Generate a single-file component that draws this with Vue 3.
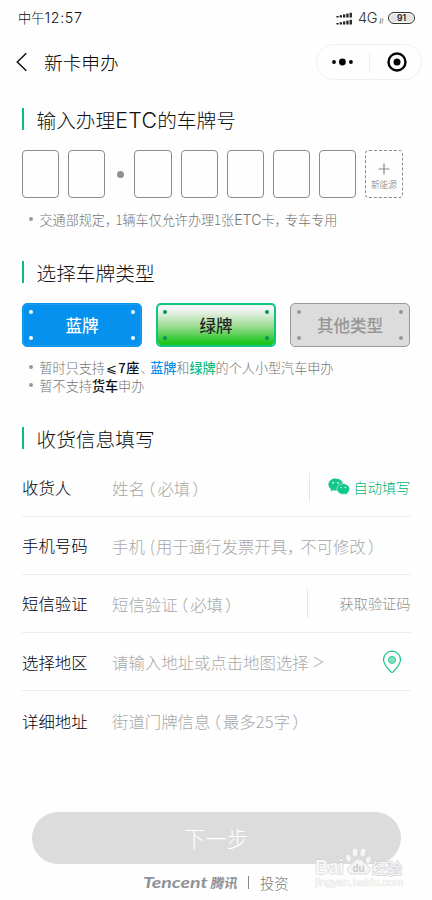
<script setup>
const signalBars = [0, 1, 2, 3, 4]
const boxesLeft = [1, 2]
const boxesRight = [1, 2, 3, 4, 5]
const plates = [
  { name: '蓝牌', kind: 'blue' },
  { name: '绿牌', kind: 'green' },
  { name: '其他类型', kind: 'other' },
]
</script>

<template>
  <div class="page">
    <header class="status">
      <span class="time">中午<span class="lat">12:57</span></span>
      <div class="status-right">
        <svg class="signal" width="17" height="13" viewBox="0 0 17 13">
          <g fill="#222">
            <rect v-for="i in signalBars" :key="'a' + i" :x="i * 3.3 + 0.4" :y="4 - i * 0.8" width="2.3" :height="1.5 + i * 0.8" />
            <rect v-for="i in signalBars" :key="'b' + i" :x="i * 3.3 + 0.4" :y="11 - i * 0.8" width="2.3" :height="1.5 + i * 0.8" />
          </g>
        </svg>
        <span class="net">4G</span>
        <svg class="updown" width="5" height="6" viewBox="0 0 5 6"><path d="M0 4.2L1.5 5.4V0.5M3.2 5.5V0.6L4.8 2" fill="none" stroke="#888" stroke-width=".8" /></svg>
        <span class="battery"><b>91</b></span>
      </div>
    </header>

    <nav class="nav">
      <svg class="back" width="12" height="20" viewBox="0 0 12 20"><path d="M10.3 1.3L1.3 10L10.3 18.7" fill="none" stroke="#111" stroke-width="1.5" /></svg>
      <h1>新卡申办</h1>
      <div class="capsule">
        <svg width="21" height="8" viewBox="0 0 21 8"><circle cx="2" cy="4" r="1.9" /><circle cx="10.4" cy="4" r="3.4" /><circle cx="18.9" cy="4" r="1.9" /></svg>
        <i></i>
        <svg width="20" height="20" viewBox="0 0 20 20"><circle cx="10" cy="10" r="8.5" fill="none" stroke="#000" stroke-width="2.4" /><circle cx="10" cy="10" r="3.5" /></svg>
      </div>
    </nav>

    <main>
      <h2 class="first">输入办理<span class="lat">ETC</span>的车牌号</h2>
      <div class="boxes">
        <span v-for="n in boxesLeft" :key="n" class="box"></span>
        <span class="dot"></span>
        <span v-for="n in boxesRight" :key="n" class="box"></span>
        <span class="box energy">
          <svg width="12" height="12" viewBox="0 0 12 12"><path d="M6 .5V11.5M.5 6H11.5" stroke="#888" stroke-width="1.2" /></svg>
          <small>新能源</small>
        </span>
      </div>
      <ul class="notes one">
        <li>交通部规定<span class="comma">，</span>1辆车仅允许办理1张<span class="lat">ETC</span>卡<span class="comma">，</span>专车专用</li>
      </ul>

      <h2 class="second">选择车牌类型</h2>
      <div class="plates">
        <div v-for="p in plates" :key="p.kind" class="plate" :class="p.kind">
          <i></i><i></i><i></i><i></i>
          <span>{{ p.name }}</span>
        </div>
      </div>
      <ul class="notes two">
        <li>暂时只支持<b class="seat">⩽7座</b><span class="pause">、</span><b class="c-blue">蓝牌</b>和<b class="c-green">绿牌</b>的个人小型汽车申办</li>
        <li>暂不支持<b>货车</b>申办</li>
      </ul>

      <h2 class="third">收货信息填写</h2>
      <div class="form">
        <div class="row">
          <label>收货人</label>
          <p>姓名<span class="open">（</span>必填<span class="close">）</span></p>
          <div class="action auto">
            <svg width="22" height="18" viewBox="0 0 22 18">
              <path d="M7.6.5C3.5.5.4 3.2.4 6.6c0 2 1.1 3.7 2.8 4.8L2.5 13.6l2.7-1.4c.9.3 1.8.4 2.8.4 3.9 0 7-2.7 7-6S11.7.5 7.6.5z" fill="#13c68b" />
              <path d="M15.3 5.7c-3.6 0-6.3 2.4-6.3 5.3s2.7 5.3 6.3 5.3c.8 0 1.6-.1 2.300-.4l2.200 1.200-.6-1.900c1.500-1 2.400-2.500 2.400-4.200 0-2.900-2.700-5.300-6.300-5.300z" fill="#13c68b" stroke="#fefefe" stroke-width=".5" />
              <g fill="#fefefe"><circle cx="5" cy="4.8" r=".9" /><circle cx="10" cy="4.8" r=".9" /><circle cx="13.2" cy="9.5" r=".75" /><circle cx="17.4" cy="9.5" r=".75" /></g>
            </svg>
            <span>自动填写</span>
          </div>
        </div>
        <div class="row">
          <label>手机号码</label>
          <p>手机<span class="half">(</span>用于通行发票开具<span class="comma">，</span>不可修改<span class="close">）</span></p>
        </div>
        <div class="row">
          <label>短信验证</label>
          <p>短信验证<span class="open">（</span>必填<span class="close">）</span></p>
          <div class="action code"><span>获取验证码</span></div>
        </div>
        <div class="row">
          <label>选择地区</label>
          <p>请输入地址或点击地图选择<svg class="more" width="11" height="12" viewBox="0 0 11 12"><path d="M.8 1L9.7 6L.8 11" fill="none" stroke="#bdbdbd" stroke-width="1.1" /></svg></p>
          <svg class="pin" width="20" height="24" viewBox="0 0 20 24">
            <path d="M10 1.2C5.2 1.2 1.5 4.9 1.5 9.5c0 4.8 4.3 9.3 7.4 12.4q1.1 1 2.2 0c3.1-3.1 7.4-7.6 7.4-12.4 0-4.6-3.7-8.3-8.5-8.3z" fill="none" stroke="#16c58d" stroke-width="1.2" />
            <circle cx="10" cy="9.9" r="3.5" fill="#86dfc0" stroke="#25ca94" />
          </svg>
        </div>
        <div class="row">
          <label>详细地址</label>
          <p>街道门牌信息<span class="open">（</span>最多<span class="num">25</span>字<span class="close">）</span></p>
        </div>
      </div>
    </main>

    <button class="next">下一步</button>
    <footer>
      <strong class="tencent">Tencent</strong><strong class="tx">腾讯</strong><i></i><span>投资</span>
    </footer>

    <div class="watermark">
      <svg width="92" height="50" viewBox="0 0 92 50">
        <g fill="#f4f4f4" stroke="#d0d0d0" stroke-width=".8">
          <ellipse cx="34.500" cy="12" rx="2.900" ry="4.200" transform="rotate(-12 34.500 12)" />
          <ellipse cx="41" cy="6.500" rx="3" ry="4.600" />
          <ellipse cx="49" cy="6.500" rx="3" ry="4.600" transform="rotate(10 49 6.500)" />
          <ellipse cx="54.300" cy="14" rx="2.900" ry="4.200" transform="rotate(15 54.300 14)" />
          <path d="M44.500 13c-4 0-5.500 4-8 6-3 2.500-3.500 4-2.500 6.500 1.500 4 7 2.500 10.500 2.500s9 1.500 11-2.500c1.200-2.500 0-4.500-3-6.500-2.500-2-4-6-8-6z" />
        </g>
        <text x="1" y="28" class="wm bai" textLength="29" lengthAdjust="spacingAndGlyphs">Bai</text>
        <text x="58" y="27.5" class="wm jy" textLength="30" lengthAdjust="spacingAndGlyphs">经验</text>
        <text x="1" y="40" class="wm url" textLength="88" lengthAdjust="spacingAndGlyphs">jingyan.baidu.com</text>
        <text x="38.500" y="25.500" class="du">du</text>
      </svg>
    </div>
  </div>
</template>

<style>
body { margin: 0; background: #fefefe; }
</style>

<style scoped>
.page { position: relative; width: 432px; height: 900px; overflow: hidden; background: #fefefe; font-family: "Noto Sans CJK SC", sans-serif; font-weight: 300; color: #222; }
.page * { box-sizing: border-box; }
h1, h2, p, ul { margin: 0; padding: 0; font-weight: 300; }
i { display: block; }
.lat { font-family: Inter, sans-serif; font-size: 1.08em; }
.status { display: flex; justify-content: space-between; align-items: center; height: 36px; padding: 0 17px 0 18px; }
.time { font-size: 13.2px; line-height: 18px; font-weight: 300; color: #111; }
.time .lat { letter-spacing: .7px; }
.status-right { display: flex; align-items: center; }
.signal { margin-right: 5px; }
.net { font: 300 14.5px/18px Inter, sans-serif; color: #333; width: 20px; letter-spacing: -.3px; }
.updown { margin: 5px 4px 0 1px; }
.battery { display: flex; align-items: center; justify-content: center; width: 27px; height: 12px; border: 1px solid #333; border-radius: 6px; background: #e2e2e2; box-shadow: inset 0 0 0 1px #fff; }
.battery b { font: 600 8.5px/10px Inter, sans-serif; color: #222; }
.nav { display: flex; align-items: center; height: 52px; padding-left: 16px; }
.back { width: 12px; }
h1 { width: 272px; margin-left: 16px; font-size: 18.7px; line-height: 28px; color: #000; }
.capsule { display: flex; align-items: center; width: 106px; height: 36px; border: 1px solid #f0f0f0; border-radius: 18px; padding-left: 15px; }
.capsule i { width: 1px; height: 21px; background: #eee; margin: 0 17px 0 16px; }
main { padding: 0 22px; width: 432px; }
h2 { display: flex; align-items: center; height: 24px; font-size: 19.7px; line-height: 24px; white-space: nowrap; color: #111; }
h2::before { content: ""; width: 2px; height: 22px; margin: -2px 12.5px 0 0; background: #0abf7e; }
h2 .lat { letter-spacing: .3px; }
.first { margin-top: 20px; }
.boxes { display: flex; align-items: center; gap: 9px; margin-top: 18px; height: 48px; }
.box { width: 37.2px; height: 48px; border: 1px solid #8b8b8b; border-radius: 4px; }
.dot { width: 7px; height: 7px; margin: 0 1px 0 3px; border-radius: 50%; background: #919191; }
.energy { display: flex; flex-direction: column; align-items: center; border-style: dashed; padding-top: 12px; }
.energy svg { display: block; }
.energy small { font-size: 8.7px; line-height: 14px; margin-top: 3px; color: #777; white-space: nowrap; }
.notes { list-style: none; font-size: 13.1px; line-height: 18px; color: #747474; white-space: nowrap; }
.notes li { display: flex; height: 18px; }
.notes li::before { content: ""; width: 4px; height: 4px; border-radius: 50%; background: #999; margin: 6px 7px 0 6.5px; }
.notes b { font-weight: 500; color: #111; }
.one { margin-top: 13px; }
.comma { font-feature-settings: "halt"; margin-right: .3em; }
.notes .seat { margin-left: 1.5px; letter-spacing: .7px; }
.pause { width: 10px; font-feature-settings: "halt"; }
.notes .c-blue { color: #078fec; }
.notes .c-green { color: #12bd82; }
.second { margin-top: 32px; }
.plates { display: flex; gap: 14.2px; margin-top: 18px; }
.plate { display: grid; grid-template-columns: 4px 1fr 4px; grid-template-rows: 4px 1fr 4px; width: 120px; height: 44px; padding: 6px; border: 1px solid #0595ed; border-radius: 5px; }
.plate i { width: 4px; height: 4px; border-radius: 50%; background: #fff; }
.plate i:nth-child(1) { grid-area: 1 / 1; }
.plate i:nth-child(2) { grid-area: 1 / 3; }
.plate i:nth-child(3) { grid-area: 3 / 1; }
.plate i:nth-child(4) { grid-area: 3 / 3; }
.plate span { grid-area: 1 / 1 / 4 / 4; align-self: center; text-align: center; font-size: 16.5px; line-height: 24px; font-weight: 500; }
.blue { background: #0591ed; color: #fff; box-shadow: inset 0 0 0 1px #1f9cef; }
.green { border: 2px solid #0dc77e; padding: 5px; background: linear-gradient(#f5f5f5 10%, #a5de9c 50%, #1bc51b 95%) padding-box; color: #252525; }
.green i { background: #06915b; }
.other { border-color: #999; background: #dcdcdc; color: #969696; }
.other i { background: #969696; }
.two { margin-top: 12px; }
.third { margin-top: 32px; }
.form { width: 388.5px; margin-top: 7px; }
.row { display: flex; align-items: center; height: 58.3px; border-bottom: 1px solid #ececec; white-space: nowrap; }
.row:first-child { padding-top: 1px; height: 58.5px; }
.row:last-child { border: 0; }
label { width: 90px; font-size: 16.4px; font-weight: 300; color: #00000a; }
p { display: flex; align-items: center; font-size: 16.4px; color: #a8a8a8; padding-top: 1px; }
.open { margin: 0 1.8px 0 2.6px; font-feature-settings: "halt"; }
.close { margin-left: 2px; font-feature-settings: "halt"; }
.half { margin: 0 1px 0 5px; }
.num { letter-spacing: .3px; }
.more { margin-left: 4px; }
.action { display: flex; align-items: center; margin-left: auto; height: 29px; border-left: 1px solid #e5e5e5; font-size: 14.2px; }
.auto { width: 102px; padding-left: 18px; color: #00b475; }
.auto span { margin-left: 4px; }
.code { width: 104px; justify-content: flex-end; color: #909090; }
.pin { margin-left: auto; margin-right: 8.500px; }
.next { display: block; width: 369px; height: 52px; margin: 62.5px 0 0 31.5px; padding: 0; border: 0; border-radius: 26px; background: #dcdcdc; color: #fff; font: 300 21.5px/52px "Noto Sans CJK SC", sans-serif; }
footer { display: flex; align-items: center; height: 20px; margin-top: 8px; padding-left: 143px; font-size: 14.3px; color: #777; }
.tencent { width: 54px; margin-right: 14px; font: italic 700 15.5px/20px Lato, sans-serif; color: #8e9296; transform: scaleX(1.26); transform-origin: left; }
.tx { font-size: 13.5px; font-weight: 700; transform: skewX(-10deg); color: #8e9296; }
footer i { width: 1px; height: 13px; background: #888; margin: 0 11px 0 10px; }
.watermark { position: absolute; left: 314px; top: 846px; }
.watermark svg { display: block; }
.wm { fill: #f7f7f7; stroke: #cfcfcf; stroke-width: 1.1px; paint-order: stroke; }
.bai { font: 700 20px "Liberation Sans", sans-serif; }
.jy { font: 500 15px "Noto Sans CJK SC", sans-serif; }
.url { font: 400 11px "Liberation Sans", sans-serif; stroke: #dedede; stroke-width: .7px; }
.du { font: 700 10px "Liberation Sans", sans-serif; fill: #cacaca; }
</style>
